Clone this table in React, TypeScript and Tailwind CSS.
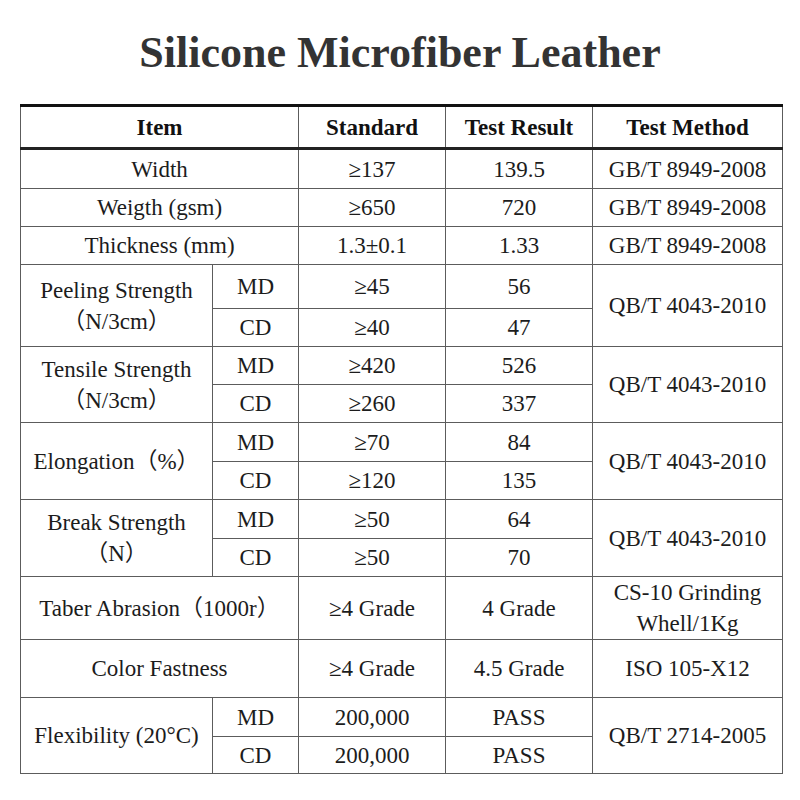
const cell = "border border-[#5c5c5c] text-center align-middle p-0";

const simpleRows = [
  { item: "Width", std: "≥137", res: "139.5", method: "GB/T 8949-2008", h: "h-[40px]" },
  { item: "Weigth (gsm)", std: "≥650", res: "720", method: "GB/T 8949-2008", h: "h-[38px]" },
  { item: "Thickness (mm)", std: "1.3±0.1", res: "1.33", method: "GB/T 8949-2008", h: "h-[38px]" },
];

const groups = [
  { label: ["Peeling Strength", "（N/3cm）"], md: ["≥45", "56"], cd: ["≥40", "47"], method: "QB/T 4043-2010", h: ["h-[44px]", "h-[38px]"] },
  { label: ["Tensile Strength", "（N/3cm）"], md: ["≥420", "526"], cd: ["≥260", "337"], method: "QB/T 4043-2010", h: ["h-[38px]", "h-[38px]"] },
  { label: ["Elongation（%）"], md: ["≥70", "84"], cd: ["≥120", "135"], method: "QB/T 4043-2010", h: ["h-[39px]", "h-[38px]"] },
  { label: ["Break Strength", "（N）"], md: ["≥50", "64"], cd: ["≥50", "70"], method: "QB/T 4043-2010", h: ["h-[39px]", "h-[38px]"] },
];

const Group = ({ g }: { g: (typeof groups)[number] }) => (
  <>
    <tr className={g.h[0]}>
      <td rowSpan={2} className={cell}>
        {g.label.map((l) => (
          <div key={l}>{l}</div>
        ))}
      </td>
      <td className={cell}>MD</td>
      <td className={cell}>{g.md[0]}</td>
      <td className={cell}>{g.md[1]}</td>
      <td rowSpan={2} className={cell}>
        {g.method}
      </td>
    </tr>
    <tr className={g.h[1]}>
      <td className={cell}>CD</td>
      <td className={cell}>{g.cd[0]}</td>
      <td className={cell}>{g.cd[1]}</td>
    </tr>
  </>
);

export default function App() {
  return (
    <div className="w-[800px] h-[800px] bg-white font-['Liberation_Serif','Noto_Sans_CJK_SC',serif] text-[#1c1c1c]">
      <h1 className="pt-[31px] text-center text-[44px] leading-[44px] font-bold text-[#333]">
        Silicone Microfiber Leather
      </h1>
      <table className="mt-[29px] ml-[20px] w-[762px] table-fixed border-collapse text-[23px] leading-[31px]">
        <colgroup>
          <col className="w-[192px]" />
          <col className="w-[86px]" />
          <col className="w-[147px]" />
          <col className="w-[147px]" />
          <col className="w-[190px]" />
        </colgroup>
        <thead>
          <tr className="h-[43px] font-bold text-[#111]">
            <th colSpan={2} className={`${cell} border-t-[3px] border-t-[#111] border-b-[3px] border-b-[#222]`}>
              Item
            </th>
            <th className={`${cell} border-t-[3px] border-t-[#111] border-b-[3px] border-b-[#222]`}>Standard</th>
            <th className={`${cell} border-t-[3px] border-t-[#111] border-b-[3px] border-b-[#222]`}>Test Result</th>
            <th className={`${cell} border-t-[3px] border-t-[#111] border-b-[3px] border-b-[#222]`}>Test Method</th>
          </tr>
        </thead>
        <tbody>
          {simpleRows.map((r) => (
            <tr key={r.item} className={r.h}>
              <td colSpan={2} className={cell}>{r.item}</td>
              <td className={cell}>{r.std}</td>
              <td className={cell}>{r.res}</td>
              <td className={cell}>{r.method}</td>
            </tr>
          ))}
          {groups.map((g) => (
            <Group key={g.label[0]} g={g} />
          ))}
          <tr className="h-[63px]">
            <td colSpan={2} className={cell}>Taber Abrasion（1000r）</td>
            <td className={cell}>≥4 Grade</td>
            <td className={cell}>4 Grade</td>
            <td className={cell}>
              <div>CS-10 Grinding</div>
              <div>Whell/1Kg</div>
            </td>
          </tr>
          <tr className="h-[58px]">
            <td colSpan={2} className={cell}>Color Fastness</td>
            <td className={cell}>≥4 Grade</td>
            <td className={cell}>4.5 Grade</td>
            <td className={cell}>ISO 105-X12</td>
          </tr>
          <tr className="h-[39px]">
            <td rowSpan={2} className={cell}>Flexibility (20°C)</td>
            <td className={cell}>MD</td>
            <td className={cell}>200,000</td>
            <td className={cell}>PASS</td>
            <td rowSpan={2} className={cell}>QB/T 2714-2005</td>
          </tr>
          <tr className="h-[37px]">
            <td className={cell}>CD</td>
            <td className={cell}>200,000</td>
            <td className={cell}>PASS</td>
          </tr>
        </tbody>
      </table>
    </div>
  );
}
